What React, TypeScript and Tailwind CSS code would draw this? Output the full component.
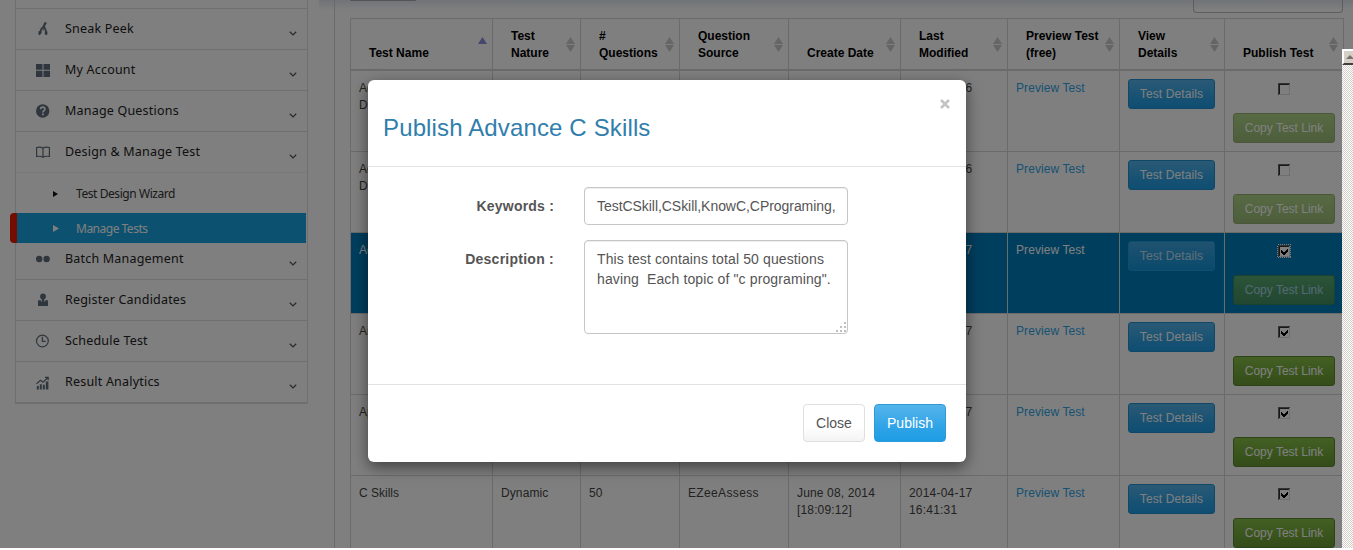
import React from "react";

const cols = "grid grid-cols-[142px_88px_99px_109px_112px_107px_112px_105px_119px]";

function Icon({ name }: { name: string }) {
  const c = "#5f6d7a";
  return (
    <svg width="16" height="16" viewBox="0 0 16 16" fill={c} stroke="none">
      {name === "sneak" && (
        <>
          <path d="M9.600 1l2.300.7-2 3.600-1.600 2.200-1.300-.8z" />
          <path d="M7.800 6C5.600 8.300 5 10.300 5.200 13M8.600 5.500c2.200 2 2.600 4.500 2.500 8" fill="none" stroke={c} strokeWidth="1.700" />
          <path d="M3.500 10.300h2.800v2l-1.400 1.700H3.500zM9.800 10.500h2.600v2.500l-1 1.300-1.600-1.300z" />
          <path d="M8.200 7v2.700" stroke={c} strokeWidth="1" />
        </>
      )}
      {name === "grid" && <path d="M1 2h6.500v5.800H1zM8.500 2H15v5.800H8.500zM1 8.800h6.500V15H1zM8.500 8.800H15V15H8.500z" />}
      {name === "help" && (
        <>
          <circle cx="7.700" cy="8" r="6.700" />
          <path d="M5.600 6.200c.1-2.900 4.600-2.700 4.300 0-.2 1.500-2 1.500-2 3.300M7.900 10.600v1.700" fill="none" stroke="#fff" strokeWidth="1.700" />
        </>
      )}
      {name === "book" && (
        <path d="M8 4.200C6.500 3 3.800 3 1.600 3.500v9c2.300-.4 4.900-.3 6.400.7 1.500-1 4.100-1.100 6.400-.7v-9C12.200 3 9.500 3 8 4.200zv9" fill="none" stroke={c} strokeWidth="1.200" />
      )}
      {name === "dots" && (
        <>
          <circle cx="4.200" cy="8" r="3.200" />
          <circle cx="11.600" cy="8" r="3.200" />
        </>
      )}
      {name === "person" && (
        <>
          <circle cx="8" cy="4.400" r="2.900" />
          <path d="M3 8.500L5.300 8l1.500 2.300V7h2.400v3.300L10.700 8l2.300.5V14H3z" />
        </>
      )}
      {name === "clock" && (
        <>
          <circle cx="7.400" cy="8" r="5.900" fill="none" stroke={c} strokeWidth="1.200" />
          <path d="M7.400 3.800V8.300h3.300" fill="none" stroke={c} strokeWidth="1.300" />
        </>
      )}
      {name === "chart" && (
        <>
          <path d="M1.800 11h2v3.500h-2zM4.800 9.200h2v5.300h-2zM7.800 9.800h2v4.700h-2zM10.800 6.500h2.600v8h-2.600z" />
          <path d="M1.500 8.800L5.500 5.300 8 7.300 13 2.500M10 2.300h3.200v3" fill="none" stroke={c} strokeWidth="1.200" />
        </>
      )}
    </svg>
  );
}

function Item({ icon, label, last, open }: { icon: string; label: string; last?: boolean; open?: boolean }) {
  return (
    <div className={"flex h-[41px] shrink-0 items-center border-b pl-[19px] pr-[10px] " + (last ? "border-b-0" : open ? "border-[#f3f3f3]" : "border-[#dedede]")}>
      <Icon name={icon} />
      <span className="ml-[13px] flex-1 whitespace-nowrap pl-[1px] text-[12.5px] tracking-[0.2px] text-[#222]">{label}</span>
      <svg width="8" height="5" viewBox="0 0 8 5" className="mt-[8px]" fill="none" stroke="#555" strokeWidth="1.300">
        <path d="M.8 .8L4 3.900 7.200 .8" />
      </svg>
    </div>
  );
}

function Sidebar() {
  return (
    <aside className="flex h-full w-[335px] shrink-0 justify-between border-r border-[#d5d5d5] bg-[#fefefe] pl-[10px] font-['Noto_Sans','Open_Sans',sans-serif]">
      <nav className="ml-[5px] flex h-[404px] w-[293px] flex-col border-x border-b-2 border-[#dedede]">
        <div className="h-[9px] shrink-0 border-b border-[#dedede]" />
        <Item icon="sneak" label="Sneak Peek" />
        <Item icon="grid" label="My Account" />
        <Item icon="help" label="Manage Questions" />
        <Item icon="book" label="Design & Manage Test" open />
        <div className="flex h-[40px] shrink-0 items-center pl-[37px] pt-[1px]">
          <svg width="5" height="6" viewBox="0 0 5 6" fill="#111"><path d="M0 0l5 3-5 3z" /></svg>
          <span className="ml-[18px] whitespace-nowrap text-[12px] tracking-[-0.43px] text-[#333]">Test Design Wizard</span>
        </div>
        <div className="-ml-[6px] flex h-[30px] w-[296px] shrink-0 items-center rounded-l-[4px] border-l-[7px] border-[#e81a00] bg-[#18a4e0] pl-[36px] pt-[1px]">
          <svg width="6" height="7" viewBox="0 0 6 7" fill="#fff"><path d="M0 0l6 3.500-6 3.500z" /></svg>
          <span className="ml-[17px] whitespace-nowrap text-[12px] tracking-[-0.5px] text-white">Manage Tests</span>
        </div>
        <div className="-mt-[4px] shrink-0">
          <Item icon="dots" label="Batch Management" />
          <Item icon="person" label="Register Candidates" />
          <Item icon="clock" label="Schedule Test" />
          <Item icon="chart" label="Result Analytics" last />
        </div>
      </nav>
      <div className="h-[10px] w-[15px] bg-linear-to-b from-[#e0e6ee] to-[#fefefe]" />
    </aside>
  );
}

const headers = [
  ["Test Name"],
  ["Test", "Nature"],
  ["#", "Questions"],
  ["Question", "Source"],
  ["Create Date"],
  ["Last", "Modified"],
  ["Preview Test", "(free)"],
  ["View", "Details"],
  ["Publish Test"],
];

type Row = {
  name: string[];
  nature?: string;
  questions?: string;
  source?: string;
  created?: string[];
  modified: string[];
  checked: boolean;
  disabled?: boolean;
  selected?: boolean;
};

const rows: Row[] = [
  { name: ["Ad", "D"], modified: ["2014-04-16"], checked: false, disabled: true },
  { name: ["Ad", "D"], modified: ["2014-04-16"], checked: false, disabled: true },
  { name: ["Ad"], modified: ["2014-04-17"], checked: true, disabled: true, selected: true },
  { name: ["An"], modified: ["2014-04-17"], checked: true },
  { name: ["Ap"], modified: ["2014-04-17"], checked: true },
  {
    name: ["C Skills"],
    nature: "Dynamic",
    questions: "50",
    source: "EZeeAssess",
    created: ["June 08, 2014", "[18:09:12]"],
    modified: ["2014-04-17", "16:41:31"],
    checked: true,
  },
];

function Check({ checked, focus }: { checked: boolean; focus?: boolean }) {
  return (
    <svg width="14" height="14" viewBox="0 0 14 14" shapeRendering="crispEdges">
      <rect x="1" y="1" width="12" height="12" fill="#fff" />
      <path d="M1.500 13V1.500H13" fill="none" stroke="#666" />
      <path d="M2.500 12V2.500H12" fill="none" stroke="#333" />
      <path d="M12.500 2v10.500H2" fill="none" stroke="#ddd" />
      {checked && <path d="M4 6v3l2 2h1l4-4V4L7 8H6z" fill="#000" />}
      {focus && <rect x=".5" y=".5" width="13" height="13" fill="none" stroke="#fff" strokeDasharray="1 1" />}
    </svg>
  );
}

function TableRow({ r }: { r: Row }) {
  const box = "overflow-hidden whitespace-nowrap border-l border-b border-[#d6d6d6] pl-[8px]";
  const cell = box + " pt-[9px]";
  return (
    <div className={cols + " h-[81px] shrink-0 " + (r.selected ? "bg-[#007dbd] text-white" : "text-[#444]")}>
      <div className={cell}>{r.name.map((t) => <div key={t}>{t}</div>)}</div>
      <div className={cell + " tracking-[0.1px]"}>{r.nature}</div>
      <div className={cell}>{r.questions}</div>
      <div className={cell + " tracking-[0.35px]"}>{r.source}</div>
      <div className={cell + " tracking-[0.15px]"}>{r.created?.map((t) => <div key={t}>{t}</div>)}</div>
      <div className={cell + " tracking-[0.2px]"}>{r.modified.map((t) => <div key={t}>{t}</div>)}</div>
      <div className={cell + " tracking-[0.08px]" + (r.selected ? "" : " text-[#2fa4e7]")}>Preview Test</div>
      <div className={box + " pt-[8px]"}>
        <button className={"h-[30px] w-[87px] rounded-[3px] border bg-linear-to-b from-[#54b4eb] via-[#2fa4e7] via-60% to-[#1d9ce5] pt-[1px] text-white tracking-[0.12px] " + (r.selected ? "border-[#2fa4e7] opacity-75" : "border-[#2290d0]")}>
          Test Details
        </button>
      </div>
      <div className={box + " flex flex-col pt-[8px]"}>
        <div className="mt-[3px] flex h-[31px] justify-center pr-[8px]">
          <Check checked={r.checked} focus={r.selected} />
        </div>
        <button className={"h-[30px] w-[102px] shrink-0 rounded-[3px] border border-[#5b852c] bg-linear-to-b from-[#88c149] via-[#73a839] via-60% to-[#699934] text-white " + (r.disabled ? "opacity-65" : "")}>
          Copy Test Link
        </button>
      </div>
    </div>
  );
}

function TestTable() {
  return (
    <main className="flex h-full w-[1018px] shrink-0 flex-col overflow-hidden bg-linear-to-b from-[#e0e6ee] to-white to-[10px] pl-[15px] font-['Liberation_Sans',Arial,sans-serif] text-[12px] leading-[17px]">
      <div className="flex h-[18px] shrink-0 items-start justify-between pr-[10px]">
        <div className="h-px w-[66px] rounded-b-[3px] bg-[#a8a8a8]" />
        <div className="h-[13px] w-[150px] rounded-b-[4px] border border-t-0 border-[#bcbcbc]" />
      </div>
      <div className="w-[994px] shrink-0 border-r border-[#d6d6d6]">
        <div className={cols + " h-[53px] border-b-2 border-t border-[#d6d6d6]"}>
          {headers.map((h, i) => (
            <div key={i} className="flex items-end justify-between whitespace-nowrap border-l border-[#d6d6d6] pb-[7px] pl-[18px] pr-[5px] font-bold text-black">
              <div>{h.map((t) => <div key={t}>{t}</div>)}</div>
              {i === 0 ? (
                <svg width="9" height="7" viewBox="0 0 9 7" className="mb-[18px]" fill="#8c8cdf"><path d="M4.500 0L9 7H0z" /></svg>
              ) : (
                <svg width="9" height="15" viewBox="0 0 9 15" className="-ml-2 mb-[10px] shrink-0" fill="#cacaca"><path d="M4.500 0L9 7H0zM0 8h9l-4.500 7z" /></svg>
              )}
            </div>
          ))}
        </div>
        {rows.map((r, i) => <TableRow key={i} r={r} />)}
      </div>
    </main>
  );
}

function Dialog() {
  return (
    <div className="absolute left-[368px] top-[80px] flex h-[382px] w-[598px] flex-col rounded-[6px] bg-white font-['Liberation_Sans',Arial,sans-serif] text-[14px] leading-[20px] text-[#555] shadow-[0_5px_15px_rgba(0,0,0,0.5)]">
      <div className="flex h-[87px] shrink-0 justify-between border-b border-[#e2e2e2] pl-[15px] pr-[16px]">
        <h2 className="pt-[34px] text-[24px] leading-[28px] tracking-[0.14px] text-[#317eac]">Publish Advance C Skills</h2>
        <svg width="10" height="10" viewBox="0 0 10 10" className="mt-[19px]" stroke="#c4c4c4" strokeWidth="2.600"><path d="M1 1l8 8M9 1L1 9" /></svg>
      </div>
      <div className="flex h-[217px] shrink-0 flex-col gap-[15px] pt-[20px]">
        <div className="flex gap-[30px]">
          <label className="w-[186px] pt-[9px] text-right font-bold tracking-[0.2px]">Keywords :</label>
          <div className="h-[38px] w-[264px] whitespace-nowrap rounded-[4px] border border-[#c6c6c6] pl-[12px] pt-[8px] tracking-[-0.05px] shadow-[inset_0_1px_1px_rgba(0,0,0,0.075)]">TestCSkill,CSkill,KnowC,CPrograming,</div>
        </div>
        <div className="flex gap-[30px]">
          <label className="w-[186px] pt-[9px] text-right font-bold tracking-[0.25px]">Description :</label>
          <div className="relative h-[94px] w-[264px] whitespace-pre rounded-[4px] border border-[#c6c6c6] pl-[12px] pt-[8px] tracking-[0.12px] shadow-[inset_0_1px_1px_rgba(0,0,0,0.075)]">
            {"This test contains total 50 questions\nhaving  Each topic of \"c programing\"."}
            <svg width="12" height="12" viewBox="0 0 12 12" className="absolute bottom-0 right-0" fill="#c0c0c0" shapeRendering="crispEdges">
              <path d="M9 1h2v2H9zM9 5h2v2H9zM5 5h2v2H5zM9 9h2v2H9zM5 9h2v2H5zM1 9h2v2H1z" />
            </svg>
          </div>
        </div>
      </div>
      <div className="flex flex-1 justify-end gap-[9px] border-t border-[#e2e2e2] pb-[20px] pr-[20px] pt-[19px]">
        <button className="h-[38px] w-[62px] rounded-[4px] border border-[#dfdfdf] bg-linear-to-b from-white via-white via-60% to-[#f3f3f3]">Close</button>
        <button className="h-[38px] w-[72px] rounded-[4px] border border-[#2f9ad8] bg-linear-to-b from-[#54b4eb] via-[#2fa4e7] via-60% to-[#1d9ce5] text-white">Publish</button>
      </div>
    </div>
  );
}

export default function App() {
  return (
    <div className="relative h-[550px] w-[1353px] overflow-hidden bg-white">
      <div className="flex h-[548px] w-[1353px] overflow-hidden">
        <Sidebar />
        <TestTable />
      </div>
      <div className="absolute left-0 top-0 h-[548px] w-full bg-black/50" />
      <div className="absolute left-[1342px] top-[49px] flex h-[499px] w-[11px] items-start overflow-hidden bg-[repeating-conic-gradient(#d2cec8_0_25%,#fff_0_50%)] bg-size-[2px_2px]">
        <div className="flex h-[16px] w-[16px] shrink-0 items-center border-b-2 border-l-2 border-t-2 border-b-[#404040] border-l-white border-t-white bg-[#d4d0c8] pl-[2px]">
          <svg width="8" height="4" viewBox="0 0 8 4" fill="#77736c" className="shrink-0"><path d="M4 0l4 4H0z" /></svg>
        </div>
      </div>
      <Dialog />
    </div>
  );
}
